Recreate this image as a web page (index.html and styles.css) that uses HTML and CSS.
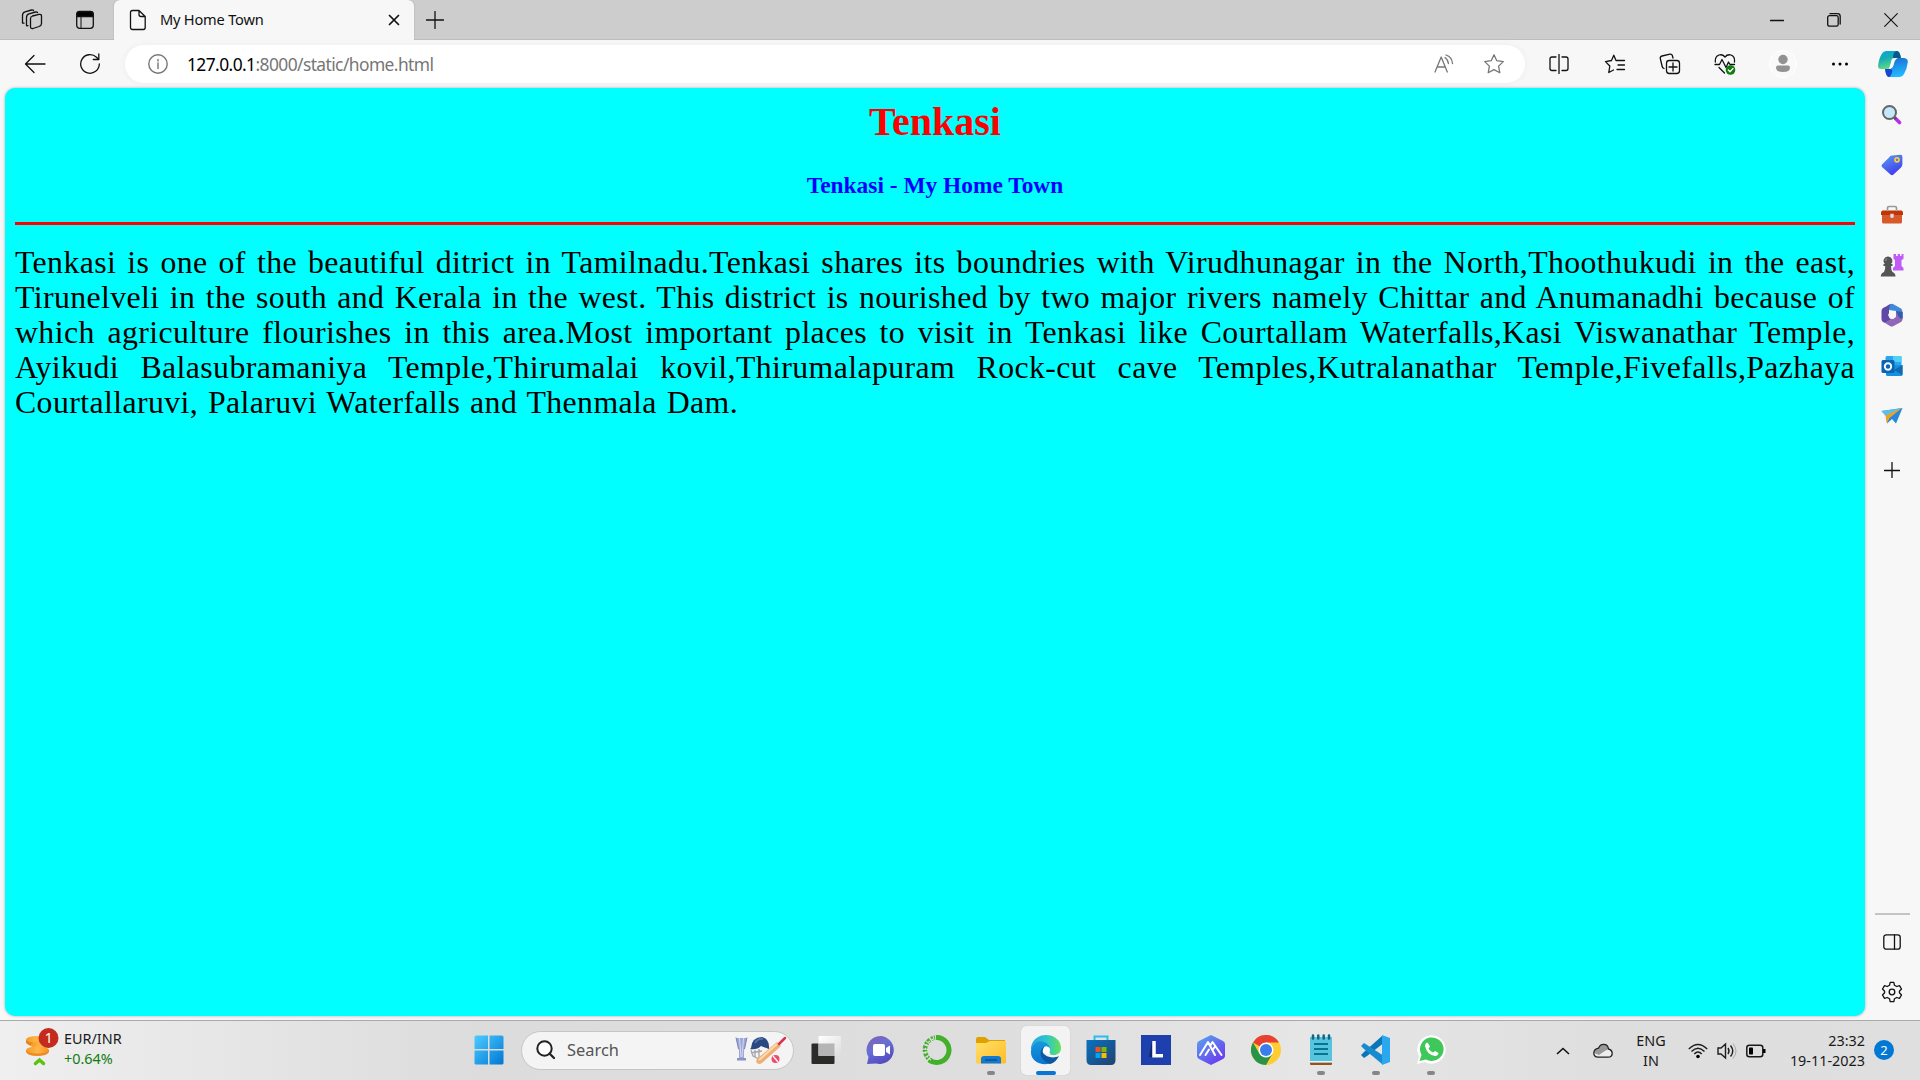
FILE: index.html
```html
<!DOCTYPE html>
<html lang="en">
<head>
<meta charset="utf-8">
<title>My Home Town</title>
<link rel="stylesheet" href="styles.css">
</head>
<body>
<div class="screen">
  <header class="tabstrip">
    <div class="slot w64 nudge"><svg class="ic line" width="24" height="24" viewBox="0 0 24 24"><path d="M11.500 8 Q9.500 8.600 9.500 10.500V18.500Q9.500 21 12 20.500L18 18.500Q20.500 17.500 20.500 15.500V8Q20.500 6 18 6.400L11.500 8"/><path d="M5.500 17.500V9.500Q5.500 6.500 8 5.800L14.500 4Q16 3.800 16.500 4.500M1.500 15V7.500Q1.500 4.500 4 3.800L10.500 2Q12 1.800 12.500 2.500M6 17.800L7 17.600M1.500 15L3 15.200" /></svg></div>
    <div class="slot w42"><svg class="ic line" width="20" height="20" viewBox="0 0 20 20"><rect x="1.700" y="1.700" width="16.600" height="16.600" rx="3"/><path d="M2 3.500Q2 1.500 4.500 1.500H15.500Q18 1.500 18 3.500V6.500H2Z" fill="#000"/><path d="M6 6V18" stroke-width="1"/></svg></div>
    <div class="tab">
      <svg class="ic line file" width="18" height="22" viewBox="0 0 18 22"><path d="M3.500 1.500H10L16.200 7.500V18.500Q16.200 20.500 14.200 20.500H3.500Q1.500 20.500 1.500 18.500V3.500Q1.500 1.500 3.500 1.500ZM10 1.500V5.500Q10 7.500 12 7.500H16"/></svg>
      <span class="tab-title">My Home Town</span>
      <svg class="ic line tab-x" width="12" height="12" viewBox="0 0 12 12"><path d="M1.500 1.500L10.500 10.500M10.500 1.500L1.500 10.500"/></svg>
    </div>
    <div class="slot w42"><svg class="ic line" width="18" height="18" viewBox="0 0 18 18"><path d="M9 .5V17.500M.5 9H17.500"/></svg></div>
    <div class="window-buttons">
      <div class="slot w57"><svg class="ic line" width="14" height="14" viewBox="0 0 14 14"><path d="M.5 7.500H13.500"/></svg></div>
      <div class="slot w57"><svg class="ic line" width="14" height="14" viewBox="0 0 14 14"><rect x=".7" y="2.700" width="10.500" height="10.500" rx="1.800"/><path d="M3 .7H10.500Q13.200 .7 13.200 3.500V11"/></svg></div>
      <div class="slot w57"><svg class="ic line" width="14" height="14" viewBox="0 0 14 14"><path d="M.7 .7L13.300 13.300M13.300 .7L.7 13.300" stroke-width="1.100"/></svg></div>
    </div>
  </header>

  <nav class="toolbar">
    <div class="slot w70"><svg class="ic line" width="22" height="20" viewBox="0 0 22 20"><path d="M21 10H1.500M10 1.500L1.500 10L10 18.500"/></svg></div>
    <div class="slot w40"><svg class="ic line" width="22" height="22" viewBox="0 0 22 22"><path d="M20.300 11A9.300 9.300 0 1 1 17.500 4.300L19.800 6.500M19.800 1V6.500H14.300"/></svg></div>
    <div class="address">
      <svg class="ic line grey info" width="20" height="20" viewBox="0 0 20 20"><circle cx="10" cy="10" r="9.200"/><path d="M10 9V14.500M10 5.500V7"/></svg>
      <span class="url"><b>127.0.0.1</b>:8000/static/home.html</span>
      <div class="slot w50"><svg class="ic line grey" width="20" height="20" viewBox="0 0 20 20"><path d="M1 18L7.200 3L13.300 18M3.300 13H11.200M11 3.500Q14 5.500 14.400 9.500M12 1Q18 3 18.500 9.500"/></svg></div>
      <div class="slot w50"><svg class="ic line grey" width="22" height="22" viewBox="0 0 22 22"><path d="M11 1.800L13.800 7.700L20.300 8.600L15.600 13.100L16.800 19.800L11 16.600L5.200 19.800L6.400 13.100L1.700 8.600L8.200 7.700Z"/></svg></div>
    </div>
    <div class="slot w56 after-address"><svg class="ic line" width="20" height="20" viewBox="0 0 20 20"><path d="M7 3H3Q1 3 1 5V14.500Q1 16.500 3 16.500H7M13 3H17Q19 3 19 5V14.500Q19 16.500 17 16.500H13M10 .5V19.500"/></svg></div>
    <div class="slot w55"><svg class="ic line" width="22" height="22" viewBox="0 0 22 22"><path d="M12 7.500L9.800 2.200L7.500 7.500L1.500 8.600L5.800 13L4.800 19.500L9.500 17M12 7.500H20.500M14 12H20.500M13 16.500H20.500"/></svg></div>
    <div class="slot w55"><svg class="ic line" width="22" height="22" viewBox="0 0 22 22"><rect x="7.500" y="7.500" width="13" height="13" rx="2.800"/><path d="M14 10V18M10 14H18M5 15.500Q3.500 15 3.200 13.500L1.300 5.500Q1 3.500 3 3L11 1.200Q13 1 13.500 3L14 5"/></svg></div>
    <div class="slot w55"><svg class="ic line" width="22" height="22" viewBox="0 0 22 22"><path d="M1.300 9Q.8 3.500 5 2Q8.500 1 11 4Q13.500 1 17 2Q21.200 3.500 20.500 9M1 11.500H5.500L8 6.500L12 14.500L14.500 9L16 11.500H20.500M5 14.500L10.500 20"/><circle cx="16.500" cy="17" r="4.800" fill="#107c10" stroke="none"/><path d="M14.300 17L16 18.700L19 15.500" stroke="#fff"/></svg></div>
    <div class="slot w61"><svg class="ic" width="28" height="28" viewBox="0 0 28 28"><circle cx="14" cy="14" r="13.500" fill="#f9f9f9" stroke="#fff"/><circle cx="14" cy="9.500" r="4.700" fill="#929292"/><path d="M7 17.500Q7 15.500 9 15.500H19Q21 15.500 21 17.500Q21 22 14 22Q7 22 7 17.500Z" fill="#929292"/></svg></div>
    <div class="slot w53"><svg class="ic" width="18" height="6" viewBox="0 0 18 6"><circle cx="2.500" cy="3" r="1.500"/><circle cx="9" cy="3" r="1.500"/><circle cx="15.500" cy="3" r="1.500"/></svg></div>
    <div class="slot w54"><svg class="ic" width="30" height="28" viewBox="0 0 30 28"><defs><linearGradient id="cp1" x2=".4" y2="1"><stop stop-color="#08a5e3"/><stop offset=".45" stop-color="#14acb5"/><stop offset="1" stop-color="#66dc83"/></linearGradient><linearGradient id="cp2" x2=".2" y2="1"><stop stop-color="#1c69d3"/><stop offset="1" stop-color="#20b9ff"/></linearGradient></defs><path d="M8 1H19Q22 1 23 8L14 9L11 19H3Q0 19 0 16Q1 8 4 3.500Q5.500 1 8 1Z" fill="url(#cp1)"/><path d="M19 1Q21.500 1 23 8H15Q15 1 19 1Z" fill="#07598b"/><path d="M18 8H26Q30 8.500 29.800 12Q29 19 26 24Q24.500 27 21 27H11Q8 27 7 19H12Q15 18 15.500 14Q16 9 18 8Z" fill="url(#cp2)"/><path d="M7 19H12Q15 19 14 22Q13 27 10.500 27Q8 26 7 19Z" fill="#1746cf"/><path d="M14 9Q15 7.500 20 8Q17 9 16 13.500Q15 18 11 19Q13 15 14 9Z" fill="#f8fbfb"/></svg></div>
  </nav>

  <div class="middle">
    <main class="page">
      <h1>Tenkasi</h1>
      <h3>Tenkasi - My Home Town</h3>
      <div class="rule"></div>
      <p>
        <span class="ln">Tenkasi is one of the beautiful ditrict in Tamilnadu.Tenkasi shares its boundries with Virudhunagar in the North,Thoothukudi in the east,</span>
        <span class="ln">Tirunelveli in the south and Kerala in the west. This district is nourished by two major rivers namely Chittar and Anumanadhi because of</span>
        <span class="ln">which agriculture flourishes in this area.Most important places to visit in Tenkasi like Courtallam Waterfalls,Kasi Viswanathar Temple,</span>
        <span class="ln">Ayikudi Balasubramaniya Temple,Thirumalai kovil,Thirumalapuram Rock-cut cave Temples,Kutralanathar Temple,Fivefalls,Pazhaya</span>
        <span class="ln last">Courtallaruvi, Palaruvi Waterfalls and Thenmala Dam.</span>
      </p>
    </main>
    <aside class="sidebar">
      <div class="side"><svg class="ic" width="22" height="22" viewBox="0 0 22 22"><path d="M14.500 14.500L18.500 18.500" stroke="#b52df0" stroke-width="3.600" stroke-linecap="round"/><path d="M12.500 12.500L15 15" stroke="#555" stroke-width="2.500"/><circle cx="8.500" cy="8.500" r="6.500" fill="#c4e8fb" stroke="#666" stroke-width="2"/></svg></div>
      <div class="side"><svg class="ic" width="22" height="22" viewBox="0 0 22 22"><defs><linearGradient id="tg" x2=".5" y2="1"><stop stop-color="#5aa0ee"/><stop offset="1" stop-color="#413ff0"/></linearGradient></defs><path d="M11 1.500L19.500 .8Q21.500 .8 21.400 3V10Q21.400 12 20 13.500L12.500 20.500Q11 22 9.500 20.500L1 13Q0 12 1 10.500L8 3.500Q9 1.700 11 1.500Z" fill="url(#tg)"/><circle cx="16" cy="5.800" r="2.100" fill="#6c7fb7" stroke="#ffd43b" stroke-width="1.500"/></svg></div>
      <div class="side"><svg class="ic" width="24" height="20" viewBox="0 0 24 20"><path d="M7.500 5V3Q7.500 1.500 9 1.500H15Q16.500 1.500 16.500 3V5" fill="none" stroke="#999" stroke-width="1.700"/><path d="M2 9H22V17Q22 18.500 20.500 18.500H3.500Q2 18.500 2 17Z" fill="#d75a2b"/><path d="M2.500 5.500H21.500Q23 5.500 23 8V10H1V8Q1 5.500 2.500 5.500Z" fill="#bd3509"/><path d="M10.300 8.800H13.700V11.500Q13.700 13 12 13Q10.300 13 10.300 11.500Z" fill="#ddd"/></svg></div>
      <div class="side"><svg class="ic" width="24" height="24" viewBox="0 0 24 24"><path d="M13.500 1H16V3H17.700V1H20V3H21.500V1H23.500V6L21.500 7V13L23.500 15V17.500H13V15L15 13V7L13.500 6Z" fill="#c05cf5"/><path d="M8 3.500A4.300 4.300 0 0 1 11 11H12.500V13H11Q11 17 12.500 19Q15.500 20 15.500 23.500H.8Q.8 20 4 19Q5.500 16.500 5.200 13H3.500V11H5A4.300 4.300 0 0 1 8 3.500Z" fill="#555"/><path d="M6 8Q5 6 7 5.500" stroke="#999" fill="none"/></svg></div>
      <div class="side"><svg class="ic" width="22" height="24" viewBox="0 0 22 24"><path d="M11 .8Q12 .8 20 5.500Q21.500 6.500 21.500 9V15L15 15V8L8 7L6 3Q9.500 .8 11 .8Z" fill="#408bd7"/><path d="M21.500 9V16Q21.500 18 20 19L12.500 23Q11 24 9 23L4 20L11 16L15 14V8Z" fill="#9165b8"/><path d="M6 3Q8 1.500 10 1Q8 3 8 6V14L11 16L4 20L2 19Q.5 18 .5 16V8Q.5 6 2 5Z" fill="#6048a7"/><path d="M15 8L21.500 9V16L18 14.500Z" fill="#315bb3"/><path d="M9 8.200H13L15 12L13 15.800H9L7 12Z" fill="#f7f7f7"/></svg></div>
      <div class="side"><svg class="ic" width="22" height="22" viewBox="0 0 22 22"><path d="M6 1H19Q20.500 1 20.500 2.500V13H4.500V2.500Q4.500 1 6 1Z" fill="#28a8ea"/><path d="M12 1H20.500V7H12Z" fill="#50d0f8"/><path d="M5 10H21.500V19.500Q21.500 21 20 21H6.500Q5 21 5 19.500Z" fill="#1490df"/><path d="M13 15L21.500 10V20Z" fill="#1369ad"/><rect x=".5" y="5" width="13" height="13" rx="1.500" fill="#0864b5"/><circle cx="7" cy="11.500" r="3.200" fill="none" stroke="#fff" stroke-width="1.900"/></svg></div>
      <div class="side"><svg class="ic" width="22" height="18" viewBox="0 0 22 18"><path d="M.5 4L21.500 1L15 16.500L11 12L6 16.500L5 9Z" fill="#2787dc"/><path d="M.5 4L21.500 1L5 9Z" fill="#58c0ed"/><path d="M4.500 8.500L21 1L8.500 11L6 16.500Z" fill="#efa21b"/></svg></div>
      <div class="side add"><svg class="ic line" width="16" height="16" viewBox="0 0 16 16"><path d="M8 .5V15.500M.5 8.500H15.500"/></svg></div>
      <div class="side-bottom">
        <div class="side"><svg class="ic line" width="18" height="16" viewBox="0 0 18 16"><rect x=".8" y=".8" width="16.400" height="14.400" rx="2.500"/><path d="M11.500 1V15"/></svg></div>
        <div class="side"><svg class="ic line" width="22" height="22" viewBox="0 0 22 22"><circle cx="11" cy="11" r="2.800"/><path d="M9.200 1.400H12.800L13.500 4.300L15.700 5.500L18.500 4.700L20.500 8L18.400 10.200V11.800L20.500 14L18.500 17.300L15.700 16.500L13.500 17.700L12.800 20.600H9.200L8.500 17.700L6.300 16.500L3.500 17.300L1.500 14L3.600 11.800V10.200L1.500 8L3.500 4.700L6.300 5.500L8.500 4.300Z"/></svg></div>
      </div>
    </aside>
  </div>

  <footer class="taskbar">
    <div class="widget">
      <svg class="ic coins" width="34" height="40" viewBox="0 0 34 40"><defs><linearGradient id="coin"><stop stop-color="#f39b20"/><stop offset=".5" stop-color="#ffb64b"/><stop offset="1" stop-color="#f2911f"/></linearGradient></defs><path d="M1 12V15Q5 19 13 19L24 17V12Z" fill="#e5841d"/><ellipse cx="12" cy="11.500" rx="11" ry="3.500" fill="url(#coin)"/><ellipse cx="16" cy="17" rx="10.500" ry="3.500" fill="url(#coin)"/><path d="M1 22V24Q3 28 12 28Q22 28 24 24V22Z" fill="#ee8b20"/><ellipse cx="12.500" cy="22" rx="11.500" ry="3.500" fill="url(#coin)"/><path d="M10.500 35.500L14.500 32L18.500 35.500" fill="none" stroke="#59c40e" stroke-width="3.500" stroke-linecap="round"/><circle cx="23.500" cy="10" r="10" fill="#c42b1c"/><text x="23.800" y="15" class="badge-text">1</text></svg>
      <div class="quote"><span>EUR/INR</span><span class="up">+0.64%</span></div>
    </div>
    <div class="dock">
      <div class="app"><svg class="ic" width="30" height="30" viewBox="0 0 30 30"><defs><linearGradient id="win" x2="1" y2="1"><stop stop-color="#4cccff"/><stop offset="1" stop-color="#0077d4"/></linearGradient></defs><path d="M2 .5H14V14H.5V2Q.5 .5 2 .5ZM15.500 .5H28Q29.500 .5 29.500 2V14H15.500ZM.5 15.500H14V29.500H2Q.5 29.500 .5 28ZM15.500 15.500H29.500V28Q29.500 29.500 28 29.500H15.500Z" fill="url(#win)"/></svg></div>
      <div class="search">
        <svg class="ic" width="20" height="20" viewBox="0 0 20 20"><circle cx="8.500" cy="8.500" r="7.200" fill="#fff" stroke="#222" stroke-width="2"/><path d="M13.500 13.500L18 18" stroke="#222" stroke-width="2.300" stroke-linecap="round"/></svg>
        <span class="search-label">Search</span>
        <svg class="ic" width="52" height="30" viewBox="0 0 52 30"><path d="M1 3H12L9 16V24H4V16Z" fill="#9ba8d5"/><path d="M4.500 3L6 22M8.500 3L7 22" stroke="#d5d9f3"/><path d="M1 2.500L3.500 14M12 2.500L9.500 14" stroke="#7c83b9"/><path d="M2 23H11V25.500H2Z" fill="#8c93c4"/><path d="M16 15L18 21L24 24L31 20M16 18L27 16M20 15V22M24 14V23" fill="none" stroke="#a5a5ac" stroke-width="1.300"/><path d="M16 13Q17 2 27 2Q35 4 34 14L26 11Q22 15 15 14Z" fill="#294782"/><path d="M20 8Q23 3 28 4" fill="none" stroke="#5271aa" stroke-width="2"/><path d="M22 28Q20 26 23 23L42 7L46 11L27 28Q24 30 22 28Z" fill="#edaf75"/><path d="M24 25L42 9" stroke="#ffd9a9" stroke-width="2"/><path d="M44 9L50 3" stroke="#d93349" stroke-width="2.500" stroke-linecap="round"/><circle cx="40.500" cy="24" r="4" fill="#f14968"/><path d="M38 21L43 27" stroke="#fff" stroke-width="1.300"/></svg>
      </div>
      <div class="app first"><svg class="ic" width="30" height="30" viewBox="0 0 30 30"><defs><linearGradient id="tv" x2="1" y2="1"><stop stop-color="#fff"/><stop offset="1" stop-color="#ddd"/></linearGradient></defs><rect x=".5" y="8.500" width="23" height="20.500" rx="1" fill="#2b2b29"/><rect x="7.500" y="1" width="22.500" height="20" rx="1" fill="url(#tv)"/><path d="M7.500 8.500H23.500V21H7.500Z" fill="#b5b5b5"/></svg></div>
      <div class="app"><svg class="ic" width="30" height="30" viewBox="0 0 30 30"><defs><linearGradient id="chat" x2=".5" y2="1"><stop stop-color="#8660a8"/><stop offset=".5" stop-color="#666fd6"/><stop offset="1" stop-color="#554cc0"/></linearGradient></defs><path d="M15 1A14.300 14 0 1 1 10 28.500L1 29L2.500 22A14 14 0 0 1 15 1Z" fill="url(#chat)"/><rect x="7" y="9" width="12" height="12" rx="2" fill="#fff"/><path d="M20 13L24 10.500V19.500L20 17Z" fill="#fff"/></svg></div>
      <div class="app"><svg class="ic" width="32" height="32" viewBox="0 0 32 32"><path d="M16 3.500A12.500 12.500 0 1 1 9 26" fill="none" stroke="#43b02a" stroke-width="5"/><path d="M12 27A12.500 12.500 0 0 1 15 3.500" fill="none" stroke="#43b02a" stroke-width="4.500" stroke-dasharray="3 1.500 2 1"/><path d="M11 26A11.500 11.500 0 0 1 14 5" fill="none" stroke="#e1e1e1" stroke-width="1.200" stroke-dasharray="2 2"/></svg></div>
      <div class="app running"><svg class="ic" width="30" height="30" viewBox="0 0 30 30"><defs><linearGradient id="fold" x2="1" y2="1"><stop stop-color="#ffe06c"/><stop offset="1" stop-color="#ffbc24"/></linearGradient></defs><path d="M0 4Q0 2 2 2H9L13 5H29V12H0Z" fill="#dfa000"/><path d="M0 8H10L14 6H30V27Q30 28.500 28 28.500H2Q0 28.500 0 27Z" fill="url(#fold)"/><path d="M5 28.500V24Q5 21 8 21H22Q25 21 25 24V28.500Z" fill="#137ad1"/><path d="M9 25H21" stroke="#064e91" stroke-width="1.300"/></svg></div>
      <div class="app active"><svg class="ic" width="32" height="32" viewBox="0 0 32 32"><defs><linearGradient id="ed1"><stop stop-color="#2aa6d8"/><stop offset=".5" stop-color="#2bc3d2"/><stop offset="1" stop-color="#65e254"/></linearGradient><linearGradient id="ed2" x2="0" y2="1"><stop stop-color="#1899dc"/><stop offset="1" stop-color="#0875d3"/></linearGradient></defs><path d="M1 13C3 4 10 1 16 1C25 1 31 7 31 14C31 19 27 21 24 21C20 21 18 20 20 17C20 12 16 9 12 9C6 9 3 12 1 17Z" fill="url(#ed1)"/><path d="M1 17C3 8 9 6 14 8C18 9 20 13 20 16C18 11 13 13 12 18C11 24 17 28 22 29C10 33 0 26 1 17Z" fill="url(#ed2)"/><path d="M15 12C8 16 9 26 20 30C24 29 27 26 29 22C23 25 16 23 13 19C12 16 13 14 15 12Z" fill="#0d58a3"/><path d="M14 13Q18 11 20 15Q18 19 21 20Q16 20 13 17Z" fill="#fff"/></svg></div>
      <div class="app"><svg class="ic" width="30" height="32" viewBox="0 0 30 32"><defs><linearGradient id="store" x2="1" y2="1"><stop stop-color="#0872c2"/><stop offset="1" stop-color="#21436d"/></linearGradient></defs><path d="M8.500 7V2.500H21.500V7" fill="none" stroke="#28bdf0" stroke-width="2"/><path d="M.5 6H29.500V26Q29.500 31 25 31H5Q.5 31 .5 26Z" fill="url(#store)"/><path d="M9.500 13H14.500V18H9.500Z" fill="#f25022"/><path d="M15.500 13H20.500V18H15.500Z" fill="#7fba00"/><path d="M9.500 19H14.500V24H9.500Z" fill="#00a4ef"/><path d="M15.500 19H20.500V24H15.500Z" fill="#ffb900"/></svg></div>
      <div class="app"><svg class="ic" width="30" height="30" viewBox="0 0 30 30"><path d="M0 0H30V30H0Z" fill="#1e3fae"/><path d="M11 6L8 22L22 23V21H13Z" fill="#0e2868"/><path d="M13 6V20.800H22" fill="none" stroke="#fff" stroke-width="3.500"/></svg></div>
      <div class="app"><svg class="ic" width="30" height="32" viewBox="0 0 30 32"><defs><linearGradient id="hex" x2=".8" y2="1"><stop stop-color="#55a9f0"/><stop offset="1" stop-color="#6d36ee"/></linearGradient></defs><path d="M15 1L27 7Q29 8 29 10V22Q29 24 27 25L15 31L3 25Q1 24 1 22V10Q1 8 3 7Z" fill="url(#hex)"/><path d="M4 21L12 8L19 21M9.500 21L13 15.500M14 12L16.500 8L25.500 21M16.500 16L19 12.500" fill="none" stroke="#fff" stroke-width="2" stroke-linecap="round" stroke-linejoin="round"/></svg></div>
      <div class="app"><svg class="ic" width="30" height="30" viewBox="0 0 30 30"><circle cx="15" cy="15" r="15" fill="#ffcd31"/><path d="M15 15L2 7.500A15 15 0 0 1 28 7.500H15Z" fill="#e84134"/><path d="M2 7.500A15 15 0 0 0 15 30L21.500 18.700L15 21L8.500 18.700Z" fill="#299347"/><circle cx="15" cy="15" r="7.500" fill="#fff"/><circle cx="15" cy="15" r="6" fill="#3b7ded"/></svg></div>
      <div class="app running"><svg class="ic" width="24" height="32" viewBox="0 0 24 32"><path d="M1 27H23V30Q23 31 22 31H2Q1 31 1 30Z" fill="#9a4f1d"/><path d="M1 3H23V28.500H1Z" fill="#55c4de"/><path d="M1 27H23V28.500H1Z" fill="#eef5f5"/><path d="M4 1.500V4.500M9.300 1.500V4.500M14.700 1.500V4.500M20 1.500V4.500" stroke="#126681" stroke-width="2.500" stroke-linecap="round"/><path d="M5 10H19M5 15H19M5 20H19" stroke="#087491" stroke-width="2"/></svg></div>
      <div class="app running"><svg class="ic" width="32" height="32" viewBox="0 0 32 32"><path d="M22 2L4 18L1 21L4 24L7 22L25 8Z" fill="#0877b9"/><path d="M4 9L1 12L4 15L22 30L24 22Z" fill="#168bd0"/><path d="M22 1L30 4V28L22 31Z" fill="#29a7ef"/></svg></div>
      <div class="app running"><svg class="ic" width="30" height="32" viewBox="0 0 30 32"><path d="M1 30L3 22A14 14 0 1 1 9 28Z" fill="#fff"/><circle cx="15.500" cy="15.500" r="14" fill="#fff"/><path d="M3.500 27L5.500 21A11.800 11.800 0 1 1 10 25.500Z" fill="#3fc85a"/><path d="M9 12Q9 9 11.500 8.500L14 12.500L12.500 14.500Q14 17.500 17 18.500L19 17L22.500 19Q22 22 19 22Q11 21 9 12Z" fill="#fff"/></svg></div>
    </div>
    <div class="tray">
      <div class="slot w40"><svg class="ic" width="14" height="8" viewBox="0 0 14 8"><path d="M1 7L7 1.500L13 7" fill="none" stroke="#111" stroke-width="1.600"/></svg></div>
      <div class="slot w40"><svg class="ic" width="20" height="16" viewBox="0 0 20 16"><path d="M5.500 5.200Q7 1.300 10.500 1.300Q15 1.300 15.500 6Q19.200 7 19.200 10.500Q19 14.200 15 14.200H5Q.8 14 .8 10Q1 6 5.500 5.200Z" fill="#ededed"/><path d="M1 10Q1 6 5.500 5.200Q7 1.300 10.500 1.300Q15 1.300 15.500 6L11 8.500L6 12L1 10Z" fill="#999"/><path d="M5.500 5.200Q7 1.300 10.500 1.300Q15 1.300 15.500 6Q19.200 7 19.200 10.500Q19 14.200 15 14.200H5Q.8 14 .8 10Q1 6 5.500 5.200Z" fill="none" stroke="#222" stroke-width="1.300"/></svg></div>
      <div class="lang"><span>ENG</span><span>IN</span></div>
      <div class="slot w35"><svg class="ic" width="20" height="16" viewBox="0 0 20 16"><path d="M.8 6Q10-3 19.200 6M3.500 8.500Q10 2 16.500 8.500M6.300 11Q10 7 13.700 11" fill="none" stroke="#1d1d1d" stroke-width="1.400"/><circle cx="10" cy="13.500" r="1.800"/></svg></div>
      <div class="slot w26"><svg class="ic" width="20" height="18" viewBox="0 0 20 18"><path d="M1 6H4L8.500 2V16L4 12H1ZM11 6Q13 9 11 12M13.500 3.500Q18 9 13.500 14.500" fill="none" stroke="#1d1d1d" stroke-width="1.400"/><path d="M16 1.500Q22 9 16 16.500" fill="none" stroke="#aaa"/></svg></div>
      <div class="slot w35"><svg class="ic" width="20" height="14" viewBox="0 0 20 14"><rect x=".8" y="1.300" width="16" height="11.400" rx="2.500" fill="none" stroke="#1a1a1a" stroke-width="1.500"/><rect x="3" y="3.500" width="4" height="7" rx=".8"/><path d="M17 5H19.500V9H17Z"/></svg></div>
      <div class="clock"><span class="time">23:32</span><span class="date">19-11-2023</span></div>
      <div class="count">2</div>
    </div>
  </footer>
</div>
</body>
</html>
```
FILE: styles.css
```css
* { box-sizing: border-box; }
body { margin: 0; overflow: hidden; font-family: "Noto Sans", "Open Sans", sans-serif; }
.screen { width: 1920px; height: 1080px; display: flex; flex-direction: column; background: #f7f7f7; }
.ic { display: block; flex: none; }
.line { fill: none; stroke: #111; stroke-width: 1.3; stroke-linejoin: round; stroke-linecap: round; }
.grey { stroke: #767676; }
.slot { flex: none; display: flex; align-items: center; justify-content: center; }
.w26 { width: 26px; }
.w35 { width: 32px; }
.w40 { width: 40px; }
.w42 { width: 42px; }
.w50 { width: 50px; }
.w53 { width: 53px; }
.w54 { width: 54px; }
.w55 { width: 55px; }
.w56 { width: 56px; }
.w57 { width: 57px; }
.w61 { width: 61px; }
.w64 { width: 64px; }
.w70 { width: 70px; }
.nudge { padding-left: 2px; }

.tabstrip { height: 40px; flex: none; display: flex; background: #cdcdcd; box-shadow: inset 0 -1px #bcbcbc; }
.tab { width: 300px; margin-left: 8px; padding-left: 15px; display: flex; align-items: center; background: #f7f7f7; border-radius: 6px 6px 0 0; box-shadow: 0 0 2px #aaa; clip-path: inset(0 -3px 0 -3px); }
.tab-title { margin-left: 13px; width: 222px; padding-bottom: 2px; font-size: 14.6px; line-height: 20px; letter-spacing: -.2px; color: #111; white-space: nowrap; }
.tab-x { margin-left: 6px; stroke-width: 1.7; }
.window-buttons { margin-left: auto; margin-right: 1px; display: flex; }

.toolbar { height: 48px; flex: none; display: flex; align-items: center; }
.address { width: 1400px; height: 38px; margin: 0 0 0 15px; padding-left: 23px; display: flex; align-items: center; background: #fff; border-radius: 19px; box-shadow: 0 0 6px #ececec; }
.info { stroke-width: 1.4; }
.url { margin-left: 19px; margin-right: auto; padding-bottom: 1px; font-size: 17.4px; line-height: 24px; color: #767676; letter-spacing: -.58px; white-space: nowrap; }
.url b { font-weight: 400; color: #000; }
.address .w50:last-child { margin-right: 6px; }
.after-address { margin-left: 6px; }

.middle { height: 932px; flex: none; display: flex; }
.page { width: 1860px; height: 928px; margin-left: 5px; padding: 0 10px; background: #0ff; border-radius: 10px; box-shadow: 0 0 3px #aaa; font-family: "Liberation Serif", serif; }
h1 { margin: 11px 0 0; font-size: 40px; line-height: 46px; text-align: center; color: #f00; }
h3 { margin: 27px 0 0; font-size: 23.4px; line-height: 27px; text-align: center; color: #00f; }
.rule { height: 3px; margin-top: 23px; background: #f00; }
.page p { margin: 20px 0 0; font-size: 31.8px; line-height: 35px; letter-spacing: .4px; color: #000; }
.ln { display: block; width: 1840px; height: 35px; white-space: nowrap; text-align: justify; text-align-last: justify; }
.last { width: 723px; }

.sidebar { flex: 1; display: flex; flex-direction: column; align-items: center; padding: 1.5px 1px 0 0; }
.side { height: 50.2px; flex: none; display: flex; align-items: center; justify-content: center; }
.add { height: 58px; }
.side-bottom { width: 35px; margin-top: auto; border-top: 2px solid #c4c4c4; height: 107px; padding-top: 2px; }

.taskbar { height: 60px; flex: none; display: flex; align-items: center; border-top: 1px solid #aaa; background: linear-gradient(90deg, #efefef, #dcdcdc 25%, #dedede 52%, #e6e6e6 68%, #dedede 85%, #dfdfdf); color: #1a1a1a; font-size: 14.4px; line-height: 20px; }
.widget { width: 461px; height: 59px; padding: 0 0 3px 25px; display: flex; align-items: center; }
.coins { margin-bottom: 2px; }
.badge-text { fill: #fff; font: 14px "Noto Sans", sans-serif; text-anchor: middle; }
.quote { display: flex; flex-direction: column; margin-left: 5px; }
.up { color: #107c10; }
.dock { display: flex; align-items: center; height: 59px; }
.app { position: relative; width: 55px; height: 49px; padding-bottom: 1px; display: flex; align-items: center; justify-content: center; }
.search { width: 273px; height: 39px; margin-left: 5px; margin-bottom: 1px; padding: 0 6px 0 14px; display: flex; align-items: center; background: #f4f4f4; border: 1px solid #c5c5c5; border-radius: 20px; }
.search-label { margin: 0 auto 0 11px; font-size: 16.4px; color: #555; }
.first { margin-left: 4px; }
.active::before { content: ""; position: absolute; left: 3px; top: 0; width: 49px; height: 49px; border-radius: 5px; background: #f3f3f3; box-shadow: 0 0 1px #aaa; }
.active .ic { position: relative; }
.running::after, .active::after { content: ""; position: absolute; left: 24px; bottom: 0; width: 8px; height: 4px; border-radius: 2px; background: #868686; }
.active::after { left: 18px; width: 20px; background: #0877d4; }
.tray { margin-left: auto; display: flex; align-items: center; height: 59px; width: 377px; }
.lang { width: 56px; display: flex; flex-direction: column; text-align: center; margin-right: 3px; }
.clock { width: 93px; display: flex; flex-direction: column; align-items: flex-end; white-space: nowrap; }
.count { width: 20px; height: 20px; margin-left: 9px; margin-bottom: 2px; border-radius: 50%; background: #0078d4; color: #fff; text-align: center; font-size: 13px; line-height: 20px; }
```
